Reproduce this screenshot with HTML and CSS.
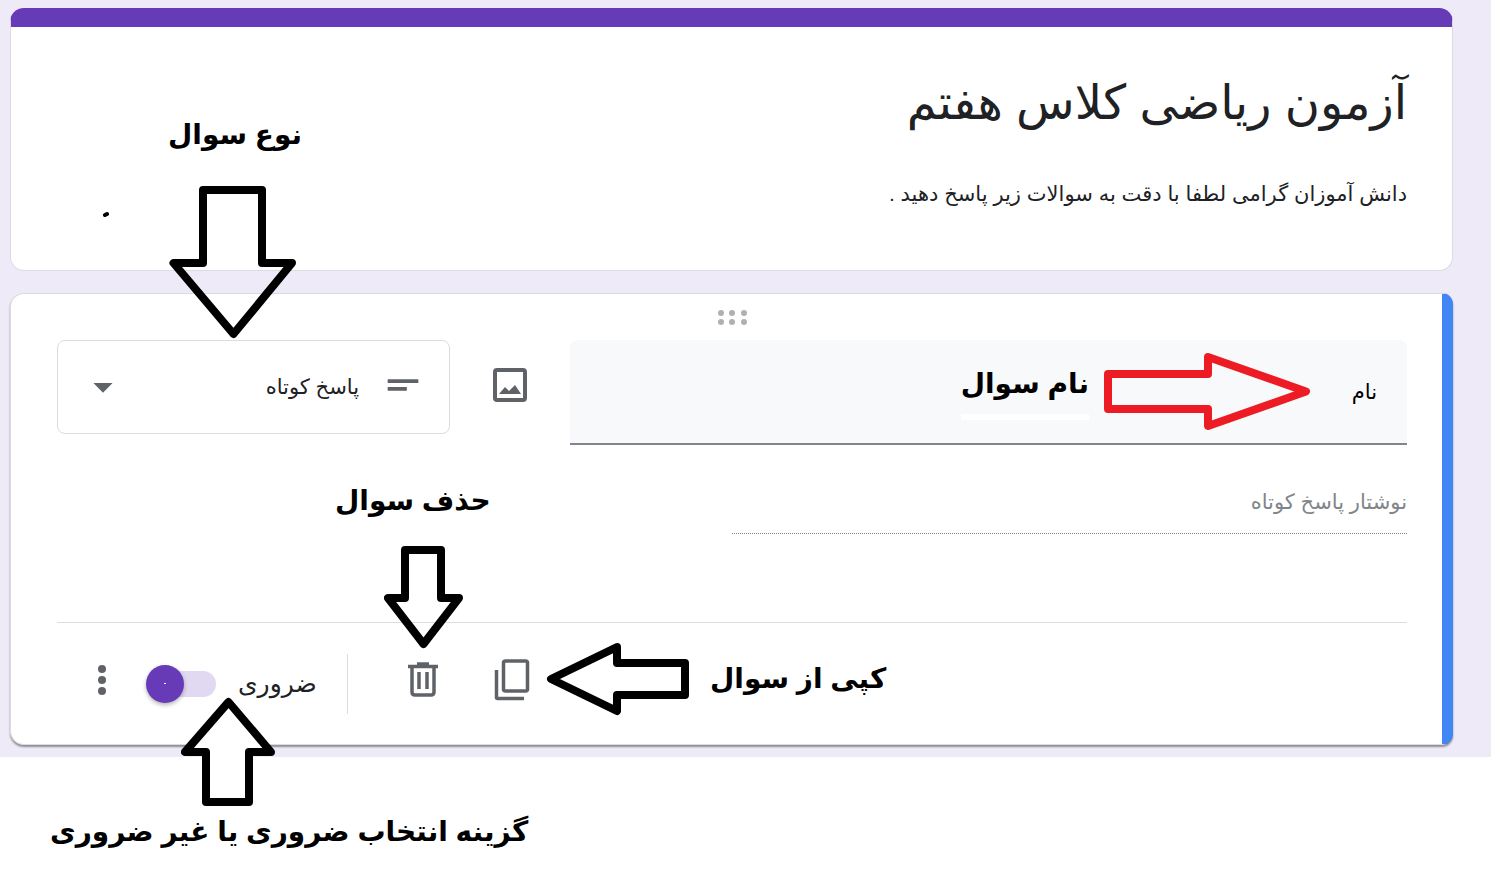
FILE: index.html
```html
<!DOCTYPE html>
<html lang="fa" dir="rtl">
<head>
    <meta charset="UTF-8">
    <meta name="viewport" content="width=device-width, initial-scale=1.0">
    <title>آزمون ریاضی کلاس هفتم</title>
    <link rel="stylesheet" href="styles.css">
</head>
<body>
    <main class="page">
        <header class="card header-card">
            <h1 class="form-title">آزمون ریاضی کلاس هفتم</h1>
            <p class="form-description">دانش آموزان گرامی لطفا با دقت به سوالات زیر پاسخ دهید .</p>
        </header>

        <form class="card question-card">
            <svg class="drag-handle" width="30" height="16" viewBox="0 0 30 16" aria-hidden="true">
                <circle cx="4" cy="3" r="3"/><circle cx="15" cy="3" r="3"/><circle cx="27" cy="3" r="3"/>
                <circle cx="4" cy="12" r="3"/><circle cx="15" cy="12" r="3"/><circle cx="27" cy="12" r="3"/>
            </svg>

            <div class="question-row">
                <input class="question-name" type="text" value="نام" aria-label="نام سوال">
                <button class="icon-button image-button" type="button" aria-label="افزودن تصویر">
                    <svg width="36" height="36" viewBox="0 0 36 36">
                        <rect x="3" y="3" width="30" height="30" rx="2" fill="none" stroke="#5f6368" stroke-width="4"/>
                        <path d="M7 27l6-7 4 4 6-6 6 9z" fill="#5f6368"/>
                    </svg>
                </button>
                <div class="type-select">
                    <svg class="type-icon" width="46" height="46" viewBox="0 0 24 24" aria-hidden="true"><path d="M4 9h16v2H4zM4 13h10v2H4z"/></svg>
                    <select aria-label="نوع سوال">
                        <option>پاسخ کوتاه</option>
                    </select>
                    <svg class="caret-icon" width="46" height="46" viewBox="0 0 24 24" aria-hidden="true"><path d="M7 11l5 5 5-5z"/></svg>
                </div>
            </div>

            <input class="short-answer" type="text" placeholder="نوشتار پاسخ کوتاه" aria-label="نوشتار پاسخ کوتاه" disabled>

            <div class="question-footer">
                <button class="icon-button" type="button" aria-label="کپی از سوال">
                    <svg width="38" height="44" viewBox="0 0 38 44" fill="none" stroke="#5f6368" stroke-width="3.5">
                        <rect x="10.5" y="3" width="24" height="30" rx="2"/>
                        <path d="M3.5 12v27.5a1 1 0 0 0 1 1H31"/>
                    </svg>
                </button>
                <button class="icon-button" type="button" aria-label="حذف سوال">
                    <svg width="30" height="36" viewBox="0 0 30 36" fill="none" stroke="#5f6368" stroke-width="3.5">
                        <path d="M0 4.5h30M4 4v26q0 3 3 3h16q3 0 3-3V4M11 10v17M19 10v17"/>
                        <path d="M9 2h12"/>
                    </svg>
                </button>
                <div class="required">
                    <label for="required">ضروری</label>
                    <input class="toggle" type="checkbox" id="required" role="switch" checked>
                </div>
                <button class="icon-button" type="button" aria-label="گزینه‌های بیشتر">
                    <svg width="8" height="32" viewBox="0 0 8 32" fill="#5f6368"><circle cx="4" cy="5" r="4"/><circle cx="4" cy="16" r="4"/><circle cx="4" cy="27" r="4"/></svg>
                </button>
            </div>
        </form>

        <!-- Tutorial notes drawn over the form -->
        <div class="note note-type">
            <span>نوع سوال</span>
            <svg width="128" height="156" viewBox="168 184 128 156"><path d="M203 190h59v73h30l-58.5 71L173.5 263H203z"/></svg>
        </div>
        <div class="note note-name">
            <svg width="208" height="80" viewBox="1103 352 208 80"><path d="M1108 374h100v-17l98 34.5-98 34.5v-17h-100z"/></svg>
            <span>نام سوال</span>
        </div>
        <div class="note note-delete">
            <span>حذف سوال</span>
            <svg width="80" height="104" viewBox="384 546 80 104"><path d="M405 550h36v48h18l-35.5 46L388 598h17z"/></svg>
        </div>
        <div class="note note-copy">
            <span>کپی از سوال</span>
            <svg width="144" height="74" viewBox="546 642 144 74"><path d="M685 663h-68v-16l-66 32 66 32v-16h68z"/></svg>
        </div>
        <div class="note note-required">
            <svg class="filled" width="94" height="110" viewBox="181 697 94 110"><path d="M206 802h43v-50h22l-42.5-50L185 752h21z"/></svg>
            <span>گزینه انتخاب ضروری یا غیر ضروری</span>
        </div>
        <svg class="note-speck" width="8" height="6" viewBox="0 0 8 6" aria-hidden="true"><path d="M3 4l2-1"/></svg>
    </main>
</body>
</html>
```
FILE: styles.css
```css
* {
    box-sizing: border-box;
}
body {
    min-height: 100vh;
    margin: 0;
    background-color: #ffffff;
    font-family: "Liberation Sans", "DejaVu Sans", sans-serif;
    font-size: 21px;
    color: #202124;
}
.page {
    position: relative;
    display: flex;
    flex-direction: column;
    gap: 22px;
    padding: 8px 38px 12px 10px;
    background-color: #eeeaf8;
}
.card {
    background: #ffffff;
    border: 1px solid #dadce0;
    border-radius: 14px;
}
.header-card {
    padding: 17px 45px 56px;
    border-top: 19px solid #673ab7;
}
.form-title {
    margin: 0;
    padding-top: 4px;
    font-size: 48px;
    font-weight: normal;
    line-height: 110px;
}
.form-description {
    margin: 0;
    padding-top: 16px;
    line-height: 40px;
}
.question-card {
    padding: 16px 35px 0 46px;
    border-right: 11px solid #4285f4;
    border-radius: 14px 11px 11px 14px;
    box-shadow: 0 2px 2px rgba(0, 0, 0, 0.4);
}
.drag-handle {
    display: block;
    margin: 0 auto 14px;
    fill: #b0b0b0;
}
.question-row {
    display: flex;
    align-items: flex-start;
}
.question-name {
    flex: 1;
    min-width: 0;
    height: 105px;
    padding: 0 30px;
    border: none;
    border-bottom: 2px solid #80868b;
    border-radius: 8px 8px 0 0;
    background-color: #f8f9fa;
    font: inherit;
    color: #000000;
}
.icon-button {
    display: flex;
    align-items: center;
    justify-content: center;
    width: 89px;
    height: 60px;
    padding: 0 0 8px;
    border: none;
    background: none;
    cursor: pointer;
}
.image-button {
    width: 120px;
    height: 90px;
    padding: 0;
}
.type-select {
    position: relative;
    flex: 0 0 393px;
}
.type-select select {
    width: 100%;
    height: 94px;
    padding: 0 90px;
    border: 1px solid #dadce0;
    border-radius: 8px;
    background: transparent;
    appearance: none;
    font: inherit;
    line-height: 40px;
    color: #202124;
}
.type-icon, .caret-icon {
    position: absolute;
    top: 22px;
    fill: #5f6368;
    pointer-events: none;
}
.type-icon {
    right: 24px;
}
.caret-icon {
    left: 23px;
}
.short-answer {
    display: block;
    width: 50%;
    height: 64px;
    margin: 25px 0 88px;
    padding: 0;
    border: none;
    border-bottom: 1px dotted #80868b;
    background: none;
    font: inherit;
}
.short-answer::placeholder {
    color: #80868b;
    opacity: 1;
}
.question-footer {
    display: flex;
    align-items: center;
    justify-content: flex-end;
    height: 122px;
    border-top: 1px solid #dadce0;
}
.required {
    display: flex;
    align-items: center;
    gap: 22px;
    height: 60px;
    margin-right: 31px;
    padding-right: 30px;
    border-right: 1px solid #dadce0;
    font-size: 25px;
}
.toggle {
    position: relative;
    width: 70px;
    height: 26px;
    margin: 0;
    border-radius: 13px;
    background: linear-gradient(to left, #e1d8f1 64px, transparent 64px);
    appearance: none;
    cursor: pointer;
}
.toggle::before {
    content: "";
    position: absolute;
    top: -6px;
    left: 0;
    width: 38px;
    height: 38px;
    border-radius: 50%;
    background: linear-gradient(#ffffff, #ffffff) center / 2px 1px no-repeat #673ab7;
    box-shadow: 0 2px 4px rgba(0, 0, 0, 0.3);
}

/* Notes */
.note {
    position: absolute;
    display: flex;
    align-items: center;
    font-size: 28px;
    font-weight: bold;
    line-height: 50px;
    color: #000000;
    white-space: nowrap;
    pointer-events: none;
}
.note svg, .note-speck {
    fill: none;
    stroke: #000000;
    stroke-width: 8;
    stroke-linejoin: round;
}
.note svg.filled {
    fill: #ffffff;
}
.note-type {
    top: 110px;
    left: 168px;
    flex-direction: column;
    align-items: flex-end;
    gap: 24px;
}
.note-name {
    top: 352px;
    right: 180px;
    gap: 14px;
}
.note-name svg {
    stroke: #ed1c24;
}
.note-name span {
    padding-bottom: 10px;
    border-bottom: 6px solid #ffffff;
    line-height: 40px;
}
.note-delete {
    top: 476px;
    left: 335px;
    flex-direction: column;
    align-items: flex-end;
    gap: 20px;
}
.note-delete svg {
    margin-left: 49px;
}
.note-copy {
    top: 642px;
    left: 546px;
    gap: 20px;
}
.note-required {
    top: 697px;
    left: 50px;
    flex-direction: column;
    align-items: flex-end;
}
.note-required svg {
    margin-left: 131px;
}
.note-speck {
    position: absolute;
    top: 211px;
    left: 102px;
    stroke-width: 4;
    stroke-linecap: round;
}
```
